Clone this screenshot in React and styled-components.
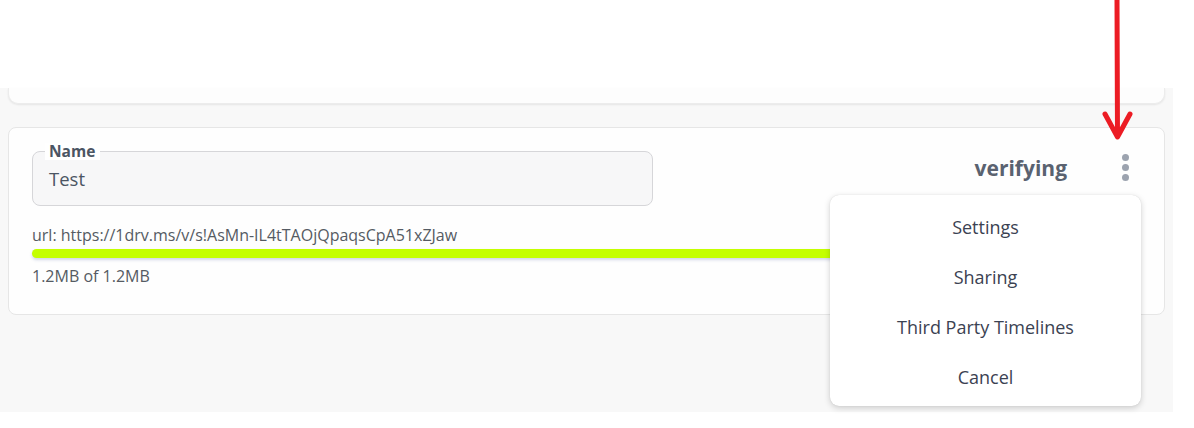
import React from "react";
import styled, { createGlobalStyle } from "styled-components";

const Global = createGlobalStyle`
  html, body { margin: 0; padding: 0; background: #ffffff; }
  body { font-family: "Open Sans", "Noto Sans", sans-serif; }
  * { box-sizing: border-box; }
`;

const Page = styled.div`
  position: relative;
  width: 1194px;
  height: 428px;
  background: #ffffff;
  overflow: hidden;
`;

const TopBlank = styled.div`
  height: 88px;
  background: #ffffff;
`;

const Content = styled.div`
  width: 1173px;
  height: 324px;
  background: #f8f8f8;
  padding: 0 8px;
  display: flex;
  flex-direction: column;
  gap: 23px;
`;

const CardTail = styled.div`
  height: 16px;
  background: #fdfdfd;
  border-radius: 0 0 10px 10px;
  border: 1px solid #ececec;
  border-top: none;
  box-shadow: 0 1px 2px rgba(0, 0, 0, 0.08);
`;

const Card = styled.div`
  position: relative;
  height: 188px;
  background: #fefefe;
  border: 1px solid #e6e6e6;
  border-radius: 8px;
  padding: 23px 23px 0 23px;
  display: flex;
  flex-direction: column;
`;

const TopRow = styled.div`
  display: flex;
  align-items: flex-start;
`;

const Field = styled.div`
  position: relative;
  width: 621px;
  height: 55px;
  background: #f7f7f8;
  border: 1px solid #d6d6d9;
  border-radius: 8px;
  padding: 14px 0 0 16px;
  font-size: 18.5px;
  color: #4b5563;
`;

const Legend = styled.span`
  position: absolute;
  left: 12px;
  top: -9px;
  padding: 0 5px 0 4px;
  background: #ffffff;
  font-size: 15.5px;
  font-weight: 700;
  line-height: 17px;
  color: #4b5563;
`;

const Status = styled.div`
  margin-left: auto;
  margin-top: 3px;
  font-size: 21px;
  font-weight: 700;
  color: #5a6270;
`;

const Kebab = styled.div`
  width: 24px;
  margin: 3px 4px 0 46px;
  display: flex;
  flex-direction: column;
  align-items: center;
  gap: 3px;
`;

const Dot = styled.span`
  width: 7px;
  height: 7px;
  border-radius: 50%;
  background: #9ca3af;
`;

const Url = styled.div`
  margin-top: 19px;
  font-size: 16px;
  line-height: 21px;
  color: #555b63;
`;

const Track = styled.div`
  margin-top: 3px;
  width: 1098px;
  height: 9px;
  border-radius: 5px;
  background: #c4ff00;
  box-shadow: 0 2px 3px rgba(80, 100, 160, 0.25);
`;

const Size = styled.div`
  margin-top: 8px;
  font-size: 16px;
  line-height: 21px;
  color: #555b63;
`;

const Menu = styled.div`
  position: absolute;
  top: 67px;
  right: 23px;
  width: 311px;
  background: #ffffff;
  border-radius: 9px;
  box-shadow: 0 2px 6px rgba(0, 0, 0, 0.18), 0 0 1px rgba(0, 0, 0, 0.15);
  padding: 7px 0 4px;
  display: flex;
  flex-direction: column;
`;

const Item = styled.div`
  height: 50px;
  display: flex;
  align-items: center;
  justify-content: center;
  font-size: 18px;
  color: #3b4252;
`;

const Arrow = styled.svg`
  position: absolute;
  left: 1100px;
  top: 0;
`;

export default function App() {
  return (
    <>
      <Global />
      <Page>
        <TopBlank />
        <Content>
          <CardTail />
          <Card>
            <TopRow>
              <Field>
                <Legend>Name</Legend>
                Test
              </Field>
              <Status>verifying</Status>
              <Kebab>
                <Dot />
                <Dot />
                <Dot />
              </Kebab>
            </TopRow>
            <Url>url: https://1drv.ms/v/s!AsMn-IL4tTAOjQpaqsCpA51xZJaw</Url>
            <Track />
            <Size>1.2MB of 1.2MB</Size>
            <Menu>
              <Item>Settings</Item>
              <Item>Sharing</Item>
              <Item>Third Party Timelines</Item>
              <Item>Cancel</Item>
            </Menu>
          </Card>
        </Content>
        <Arrow width="36" height="145" viewBox="0 0 36 145">
          <path
            d="M17 0 L17.5 137 M5 114 L17.5 137 L30 114"
            fill="none"
            stroke="#ec1c24"
            strokeWidth="5"
            strokeLinecap="round"
            strokeLinejoin="round"
          />
        </Arrow>
      </Page>
    </>
  );
}
